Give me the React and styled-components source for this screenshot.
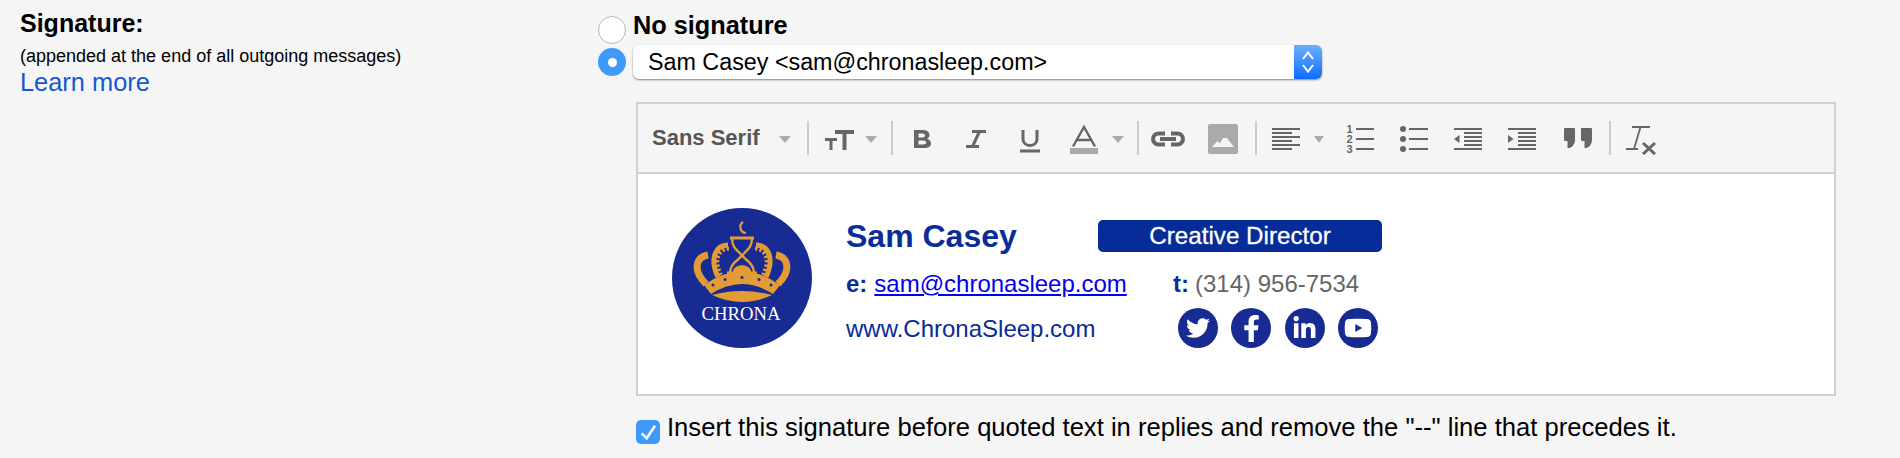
import React from "react";
import styled, { createGlobalStyle } from "styled-components";
import { FaTwitter, FaFacebookF, FaLinkedinIn, FaYoutube } from "react-icons/fa";

const GlobalStyle = createGlobalStyle`
  html, body {
    margin: 0;
    background: #f5f5f5;
    font-family: "Liberation Sans", Arial, sans-serif;
    color: #000;
  }
`;

const Page = styled.div`
  display: flex;
  width: 1900px;
  height: 458px;
  box-sizing: border-box;
  padding: 0 0 0 20px;
  overflow: hidden;
`;
const Sidebar = styled.div`
  width: 578px;
  flex: none;
  padding-top: 9px;
`;
const SideTitle = styled.div`
  font-size: 25px;
  font-weight: 700;
  line-height: 29px;
`;
const SideHint = styled.div`
  font-size: 18px;
  line-height: 20px;
  margin-top: 8px;
`;
const LearnMore = styled.a`
  display: block;
  font-size: 25.4px;
  line-height: 29px;
  margin-top: 2px;
  color: #1558d0;
`;
const Main = styled.div`
  flex: 1;
  padding-top: 16px;
`;
const RadioRow = styled.div`
  display: flex;
  align-items: center;
  gap: 7px;
  margin-top: ${props => props.$top || 0}px;
`;
const Radio = styled.span`
  width: 28px;
  height: 28px;
  flex: none;
  box-sizing: border-box;
  border-radius: 50%;
  display: flex;
  align-items: center;
  justify-content: center;
  background: ${props => (props.$checked ? "#409afc" : "#fff")};
  border: ${props => (props.$checked ? "none" : "1px solid #b9b9b9")};
  &::after {
    content: "";
    display: ${props => (props.$checked ? "block" : "none")};
    width: 9px;
    height: 9px;
    border-radius: 50%;
    background: #fff;
  }
`;
const RadioLabel = styled.span`
  font-size: 25.3px;
  font-weight: 700;
  line-height: 28px;
  position: relative;
  top: -5px;
`;
const Select = styled.div`
  width: 689px;
  height: 34px;
  display: flex;
  align-items: center;
  justify-content: space-between;
  background: #fff;
  border-radius: 6px;
  box-shadow: 0 1px 2px rgba(0, 0, 0, 0.45);
  font-size: 23.3px;
  overflow: hidden;
`;
const SelectText = styled.span`
  padding-left: 15px;
`;
const Stepper = styled.span`
  width: 28px;
  height: 34px;
  display: flex;
  align-items: center;
  justify-content: center;
  background: linear-gradient(#6db0fd, #0f6cfb);
`;
const Editor = styled.div`
  width: 1200px;
  margin: 23px 0 0 38px;
  box-sizing: border-box;
  border: 2px solid #d0d0d0;
`;
const Toolbar = styled.div`
  height: 68px;
  display: flex;
  align-items: center;
  padding-left: 14px;
  border-bottom: 2px solid #d0d0d0;
`;
const FontName = styled.span`
  font-size: 22px;
  font-weight: 700;
  color: #555;
  width: 109px;
`;
const ToolIcon = styled.svg`
  flex: none;
  height: 34px;
  width: ${props => props.$w}px;
  margin-left: ${props => props.$ml || 0}px;
  color: #666;
`;
const Arrow = styled.span`
  flex: none;
  width: 0;
  height: 0;
  margin-left: ${props => props.$ml}px;
  border-left: ${props => props.$size}px solid transparent;
  border-right: ${props => props.$size}px solid transparent;
  border-top: 7px solid #aaa;
  position: relative;
  top: 1px;
`;
const Separator = styled.span`
  flex: none;
  width: 2px;
  height: 34px;
  margin-left: ${props => props.$ml}px;
  background: #ccc;
`;
const SignatureBody = styled.div`
  height: 220px;
  box-sizing: border-box;
  background: #fff;
  padding: 34px;
  display: flex;
  gap: 34px;
`;
const InfoColumn = styled.div`
  padding-top: 12px;
  color: #0a2a96;
`;
const NameRow = styled.div`
  display: flex;
  align-items: center;
  height: 32px;
`;
const Name = styled.span`
  font-size: 32px;
  font-weight: 700;
  width: 252px;
  color: #0a2c98;
`;
const RoleBadge = styled.span`
  width: 284px;
  height: 32px;
  border-radius: 5px;
  background: #062c99;
  color: #fff;
  font-size: 24.2px;
  line-height: 32px;
  text-align: center;
  -webkit-text-stroke: 0.3px #fff;
`;
const InfoRow = styled.div`
  display: grid;
  grid-template-columns: 327px 1fr;
  align-items: center;
  height: ${props => props.$h}px;
  margin-top: ${props => props.$top}px;
  font-size: 24px;
`;
const Website = styled.span`
  padding-top: 2px;
`;
const Strong = styled.b`
  margin-right: ${props => props.$gap}px;
  color: #0a2c98;
`;
const Mail = styled.a`
  color: #0000ee;
  text-decoration: underline;
`;
const Phone = styled.span`
  color: #666;
`;
const Socials = styled.div`
  display: flex;
  gap: 13.3px;
  padding-left: 5px;
`;
const SocialDot = styled.span`
  width: 40px;
  height: 40px;
  border-radius: 50%;
  background: #172b92;
  color: #fff;
  display: flex;
  align-items: center;
  justify-content: center;
  font-size: ${props => props.$size}px;
`;
const CheckRow = styled.label`
  display: flex;
  align-items: flex-start;
  gap: 7px;
  margin: 19px 0 0 38px;
  font-size: 25.6px;
  line-height: 24px;
`;
const CheckBox = styled.span`
  width: 24px;
  height: 24px;
  flex: none;
  margin-top: 5px;
  border-radius: 5px;
  background: #409afc;
  display: flex;
`;

const Logo = () => (
  <svg width="140" height="140" viewBox="0 0 140 140" style={{ flex: "none" }}>
    <circle cx="70" cy="70" r="70" fill="#172b92" />
    <g fill="none" stroke="#e39b36">
      <path d="M71 14 A6 6 0 0 0 74 25" strokeWidth="2.2" />
      <path d="M58 30 H82 M55 65 H85" strokeWidth="3" />
      <path d="M60 30 C60 42 68 43 69.5 47.5 C68 52 59 53 58 64 M80 30 C80 42 72 43 70.5 47.5 C72 52 81 53 82 64" strokeWidth="2.4" />
      <path d="M56 37 C44 37 37 50 46 69 M84 37 C96 37 103 50 94 69" strokeWidth="5" />
      <path d="M57 40.5 C47 41 41 51 49 67 M83 40.5 C93 41 99 51 91 67" strokeWidth="4" strokeDasharray="2.5 2" />
      <path d="M36 47 C24 49 20 62 34 76 M104 47 C116 49 120 62 106 76" strokeWidth="7" />
    </g>
    <path d="M61 64 C61 55 79 55 79 64 Z" fill="#e39b36" />
    <path d="M32 77 Q70 50 108 77 L101 86 Q70 66 39 86 Z" fill="#e39b36" />
    <path d="M40 87 Q70 79 100 87 Q70 101 40 87 Z" fill="#e39b36" />
    <g fill="#172b92">
      <circle cx="41" cy="77" r="1.5" /><circle cx="53" cy="71.5" r="1.5" /><circle cx="70" cy="69.5" r="1.5" />
      <circle cx="87" cy="71.5" r="1.5" /><circle cx="99" cy="77" r="1.5" />
    </g>
    <text x="69" y="112" textAnchor="middle" fill="#fff" fontSize="18.7" fontFamily="'Liberation Serif', serif">CHRONA</text>
  </svg>
);

const App = () => {
  const aligned = [[8, 28], [12, 20], [16, 28], [20, 20], [24, 28], [28, 20]];
  const indentRows = [[0, 8], [10, 12], [10, 16], [10, 20], [10, 24], [0, 28]];
  return (
    <>
      <GlobalStyle />
      <Page>
        <Sidebar>
          <SideTitle>Signature:</SideTitle>
          <SideHint>(appended at the end of all outgoing messages)</SideHint>
          <LearnMore>Learn more</LearnMore>
        </Sidebar>
        <Main>
          <RadioRow>
            <Radio />
            <RadioLabel>No signature</RadioLabel>
          </RadioRow>
          <RadioRow $top={1}>
            <Radio $checked />
            <Select>
              <SelectText>Sam Casey &lt;sam@chronasleep.com&gt;</SelectText>
              <Stepper>
                <svg width="14" height="26" viewBox="0 0 14 26" fill="none" stroke="#fff" strokeWidth="2">
                  <path d="M2 10 L7 3.5 L12 10 M2 16 L7 22.5 L12 16" />
                </svg>
              </Stepper>
            </Select>
          </RadioRow>
          <Editor>
            <Toolbar>
              <FontName>Sans Serif</FontName>
              <Arrow $ml={18} $size={6} />
              <Separator $ml={16} />
              <ToolIcon $w={29} $ml={16} viewBox="0 0 29 34" fill="currentColor">
                <path d="M10 9h19v4h-7.5v16h-4V13H10z M0 17h12v3H7.5v9h-3v-9H0z" />
              </ToolIcon>
              <Arrow $ml={11} $size={6} />
              <Separator $ml={14} />
              <ToolIcon $w={18} $ml={20} viewBox="0 0 18 34" fill="currentColor">
                <path fillRule="evenodd" d="M1 9H10C15 9 16.5 12 16.5 14C16.5 16 15.5 17 14 17.7C16.5 18.3 18 20 18 22.5C18 25.5 15.5 27 11 27H1Z M5.5 12.5V16.5H9.5C11 16.5 12 15.8 12 14.5C12 13.2 11 12.5 9.5 12.5Z M5.5 19.5V23.5H10C12 23.5 13.3 22.8 13.3 21.5C13.3 20.2 12 19.5 10 19.5Z" />
              </ToolIcon>
              <ToolIcon $w={20} $ml={35} viewBox="0 0 20 34" fill="none" stroke="currentColor" strokeWidth="3">
                <path d="M6 10.5H20M0 25.5H13M13.5 10.5L6.5 25.5" />
              </ToolIcon>
              <ToolIcon $w={20} $ml={34} viewBox="0 0 20 34" fill="none" stroke="currentColor" strokeWidth="3">
                <path d="M3 9V18C3 22 6 24.5 10 24.5C14 24.5 17 22 17 18V9M0 30H20" />
              </ToolIcon>
              <ToolIcon $w={28} $ml={30} viewBox="0 0 28 34">
                <path d="M3 25.5L14 6L25 25.5M7.5 19H20.5" fill="none" stroke="currentColor" strokeWidth="2.4" />
                <rect x="0" y="27" width="28" height="6" fill="#aaa" />
              </ToolIcon>
              <Arrow $ml={14} $size={6} />
              <Separator $ml={13} />
              <ToolIcon $w={36} $ml={11} viewBox="0 0 36 34" fill="none" stroke="currentColor" strokeWidth="4">
                <path d="M15 12.5H8.5A5.5 5.5 0 0 0 8.5 23.5H15M21 12.5H27.5A5.5 5.5 0 0 1 27.5 23.5H21M10 18H26" />
              </ToolIcon>
              <ToolIcon $w={30} $ml={22} viewBox="0 0 30 34">
                <rect x="0" y="3" width="30" height="30" rx="2" fill="#aaa" />
                <path d="M4 26L9.5 20L12 22.5L15 17L19 17L26 26Z" fill="#f5f5f5" />
              </ToolIcon>
              <Separator $ml={17} />
              <ToolIcon $w={28} $ml={15} viewBox="0 0 28 34" fill="currentColor">
                {aligned.map(([y, w]) => <rect key={y} x="0" y={y - 1} width={w} height="2" />)}
              </ToolIcon>
              <Arrow $ml={14} $size={5} />
              <ToolIcon $w={28} $ml={22} viewBox="0 0 28 34" fill="currentColor">
                <text x="3.5" y="12" textAnchor="middle" fontSize="11" fontWeight="700" fontFamily="'Liberation Sans', sans-serif">1</text>
                <text x="3.5" y="22" textAnchor="middle" fontSize="11" fontWeight="700" fontFamily="'Liberation Sans', sans-serif">2</text>
                <text x="3.5" y="32" textAnchor="middle" fontSize="11" fontWeight="700" fontFamily="'Liberation Sans', sans-serif">3</text>
                <rect x="10" y="7" width="18" height="2" /><rect x="10" y="17" width="18" height="2" /><rect x="10" y="27" width="18" height="2" />
              </ToolIcon>
              <ToolIcon $w={28} $ml={26} viewBox="0 0 28 34" fill="currentColor">
                <circle cx="3" cy="8" r="3" /><circle cx="3" cy="18" r="3" /><circle cx="3" cy="28" r="3" />
                <rect x="9" y="7" width="19" height="2" /><rect x="9" y="17" width="19" height="2" /><rect x="9" y="27" width="19" height="2" />
              </ToolIcon>
              <ToolIcon $w={28} $ml={26} viewBox="0 0 28 34" fill="currentColor">
                {indentRows.map(([x, y]) => <rect key={y} x={x} y={y - 1} width={28 - x} height="2" />)}
                <path d="M0 18L5.5 14V22Z" />
              </ToolIcon>
              <ToolIcon $w={28} $ml={26} viewBox="0 0 28 34" fill="currentColor">
                {indentRows.map(([x, y]) => <rect key={y} x={x} y={y - 1} width={28 - x} height="2" />)}
                <path d="M5.5 18L0 14V22Z" />
              </ToolIcon>
              <ToolIcon $w={28} $ml={28} viewBox="0 0 28 34" fill="currentColor">
                <path d="M0 8a1 1 0 0 1 1-1H10a1 1 0 0 1 1 1V18C11 22.5 9 26 5.5 27H3.5V20H1a1 1 0 0 1-1-1Z" />
                <path d="M17 8a1 1 0 0 1 1-1H27a1 1 0 0 1 1 1V18C28 22.5 26 26 22.5 27H20.5V20H18a1 1 0 0 1-1-1Z" />
              </ToolIcon>
              <Separator $ml={17} />
              <ToolIcon $w={30} $ml={15} viewBox="0 0 30 34" fill="none" stroke="currentColor">
                <path d="M6 6H24M14.5 6L8 28M0 28H12" strokeWidth="1.8" />
                <path d="M17 22L29 33M29 22L17 33" strokeWidth="3" />
              </ToolIcon>
            </Toolbar>
            <SignatureBody>
              <Logo />
              <InfoColumn>
                <NameRow>
                  <Name>Sam Casey</Name>
                  <RoleBadge>Creative Director</RoleBadge>
                </NameRow>
                <InfoRow $h={32} $top={16}>
                  <span><Strong $gap={7}>e:</Strong><Mail>sam@chronasleep.com</Mail></span>
                  <span><Strong $gap={6}>t:</Strong><Phone>(314) 956-7534</Phone></span>
                </InfoRow>
                <InfoRow $h={40} $top={8}>
                  <Website>www.ChronaSleep.com</Website>
                  <Socials>
                    <SocialDot $size={24}><FaTwitter /></SocialDot>
                    <SocialDot $size={27}><FaFacebookF /></SocialDot>
                    <SocialDot $size={25}><FaLinkedinIn /></SocialDot>
                    <SocialDot $size={28}><FaYoutube /></SocialDot>
                  </Socials>
                </InfoRow>
              </InfoColumn>
            </SignatureBody>
          </Editor>
          <CheckRow>
            <CheckBox>
              <svg width="24" height="24" viewBox="0 0 24 24" fill="none" stroke="#fff" strokeWidth="2.5">
                <path d="M5.7 13.3L10.7 18.3L19 5.7" />
              </svg>
            </CheckBox>
            Insert this signature before quoted text in replies and remove the "--" line that precedes it.
          </CheckRow>
        </Main>
      </Page>
    </>
  );
};

export default App;
